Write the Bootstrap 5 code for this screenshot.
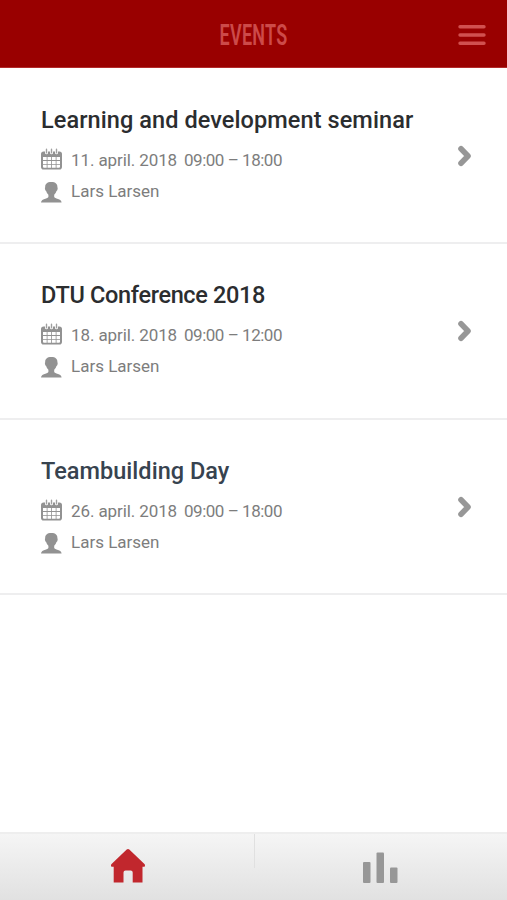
<!DOCTYPE html>
<html lang="en">
<head>
<meta charset="utf-8">
<meta name="viewport" content="width=device-width, initial-scale=1">
<title>Events</title>
<link rel="stylesheet" href="https://cdn.jsdelivr.net/npm/bootstrap@5.3.0/dist/css/bootstrap.min.css">
<style>
body{font-family:Roboto,"Open Sans",sans-serif;background:#fff}
.topbar{height:68px;background:#990000;padding:3px 21px 0;border-bottom:1px solid #b22b2b}
.topbar h1{font:600 30px/1 Roboto,sans-serif;color:#cc4a49;transform:scaleX(.6);letter-spacing:.4px}
.side{width:28px}
.event{height:175.4px;padding:35px 35px 0 41px;border-bottom:2px solid #eeeeef;color:#2b2d2f}
.events{padding-top:1px}
.event h2{font-size:23.5px;line-height:32px;font-weight:500;margin:0 0 9px;letter-spacing:.08px;white-space:nowrap}
.event h2.tight{letter-spacing:-.34px}
.event.cool h2{color:#37434f;letter-spacing:.02px}
.meta{height:31px;line-height:31px;font-size:17px;color:#7d7d7d;gap:9px}
.date{width:113px;white-space:nowrap;letter-spacing:-.1px}
.time{letter-spacing:-.48px}
.cal-icon{margin-bottom:3px}
.person-icon{margin-top:2px}
.chev{margin-top:41px}
.tabs{height:68px;background:linear-gradient(#f5f5f5,#e1e1e1);border-top:2px solid #eee}
.tab-sep{width:1px;height:34px;background:#e0e0e0}
.home-icon{margin:0 0 2px 2px}
.bars-icon{margin:2px 1px 0 0}
</style>
</head>
<body class="vh-100 d-flex flex-column overflow-hidden">
<svg class="d-none" xmlns="http://www.w3.org/2000/svg">
  <symbol id="cal" viewBox="0 0 21 22">
    <path fill="#929292" fill-rule="evenodd" d="M2.600 3.500H4v1.200a1.500 1.500 0 0 0 3 0V3.500h2v1.200a1.500 1.500 0 0 0 3 0V3.500h2v1.200a1.500 1.500 0 0 0 3 0V3.500h1.400Q21 3.500 21 6v12.700Q21 21.500 18.400 21.500H2.600Q0 21.500 0 18.700V6Q0 3.500 2.600 3.500zM2 9v3h3.700V9zM6.500 9v3h3.700V9zM11 9v3h3.700V9zM15.500 9v3H19V9zM2 12.900v3h3.700v-3zM6.500 12.900v3h3.700v-3zM11 12.900v3h3.700v-3zM15.500 12.900v3H19v-3zM2 16.800v2Q2 19.800 3 19.800h2.700v-3zM6.500 16.800v3h3.700v-3zM11 16.800v3h3.700v-3zM15.500 16.800v3H18Q19 19.800 19 18.800v-2z"/>
    <path stroke="#a0a0a0" stroke-width="1.400" stroke-linecap="round" d="M5.500 1.200v3.500M10.500 1.200v3.500M15.500 1.200v3.500"/>
  </symbol>
  <symbol id="person" viewBox="0 0 21 21">
    <path fill="#929292" d="M10.300 0C14.600 0 16.600 2 16.400 5.200Q17 5.500 16.500 7.400Q16.200 8.600 15.500 9Q14.800 11.400 13.200 12.800V15Q13.500 15.800 15.500 16.500Q20.500 17.500 20.600 20.600H0Q.1 17.500 5.100 16.500Q7.100 15.800 7.400 15V12.800Q5.800 11.400 5.100 9Q4.400 8.600 4.100 7.400Q3.600 5.500 4.200 5.200C4 2 6 0 10.300 0z"/>
  </symbol>
  <symbol id="chevron" viewBox="0 0 15 22">
    <path fill="none" stroke="#979797" stroke-width="5.600" stroke-linecap="round" stroke-linejoin="round" d="M4 3.800L11 11L4 18.200"/>
  </symbol>
</svg>
<header class="topbar d-flex align-items-center justify-content-between flex-shrink-0">
  <span class="side"></span>
  <h1 class="m-0">EVENTS</h1>
  <svg class="side" height="22" viewBox="0 0 28 22"><path stroke="#d1504f" stroke-width="3.400" stroke-linecap="round" d="M2 2.800h24M2 11h24M2 19.300h24"/></svg>
</header>
<main class="events flex-grow-1">
  <article class="event d-flex justify-content-between">
    <div>
      <h2>Learning and development seminar</h2>
      <div class="meta d-flex align-items-center"><svg class="cal-icon" width="21" height="22"><use href="#cal"/></svg><span class="d-flex"><span class="date">11. april. 2018</span><span class="time">09:00 – 18:00</span></span></div>
      <div class="meta d-flex align-items-center"><svg class="person-icon" width="21" height="21"><use href="#person"/></svg><span>Lars Larsen</span></div>
    </div>
    <svg class="chev" width="15" height="22"><use href="#chevron"/></svg>
  </article>
  <article class="event d-flex justify-content-between">
    <div>
      <h2 class="tight">DTU Conference 2018</h2>
      <div class="meta d-flex align-items-center"><svg class="cal-icon" width="21" height="22"><use href="#cal"/></svg><span class="d-flex"><span class="date">18. april. 2018</span><span class="time">09:00 – 12:00</span></span></div>
      <div class="meta d-flex align-items-center"><svg class="person-icon" width="21" height="21"><use href="#person"/></svg><span>Lars Larsen</span></div>
    </div>
    <svg class="chev" width="15" height="22"><use href="#chevron"/></svg>
  </article>
  <article class="event cool d-flex justify-content-between">
    <div>
      <h2>Teambuilding Day</h2>
      <div class="meta d-flex align-items-center"><svg class="cal-icon" width="21" height="22"><use href="#cal"/></svg><span class="d-flex"><span class="date">26. april. 2018</span><span class="time">09:00 – 18:00</span></span></div>
      <div class="meta d-flex align-items-center"><svg class="person-icon" width="21" height="21"><use href="#person"/></svg><span>Lars Larsen</span></div>
    </div>
    <svg class="chev" width="15" height="22"><use href="#chevron"/></svg>
  </article>
</main>
<nav class="tabs d-flex flex-shrink-0">
  <a href="#" class="flex-fill d-flex justify-content-center align-items-center" aria-label="Home">
    <svg class="home-icon" width="36" height="36" viewBox="0 0 36 36"><path fill="#c1272d" d="M16.700 1.500Q18 .3 19.300 1.500L34.700 16.200Q35.700 18.700 33.500 18.800H32.500V34.500H22.700V24.500Q22.700 22.500 20.700 22.500H15.500Q13.500 22.500 13.500 24.500V34.500H3.700V18.800H2.500Q.3 18.700 1.300 16.200z"/></svg>
  </a>
  <span class="tab-sep"></span>
  <a href="#" class="flex-fill d-flex justify-content-center align-items-center" aria-label="Statistics">
    <svg class="bars-icon" width="36" height="32" viewBox="0 0 36 32"><g fill="#979797"><rect x="1" y="10" width="7.500" height="21" rx="1"/><rect x="14.500" y="0.500" width="7.500" height="30.500" rx="1"/><rect x="28" y="15.500" width="7.500" height="15.500" rx="1"/></g></svg>
  </a>
</nav>
<script src="https://cdn.jsdelivr.net/npm/bootstrap@5.3.0/dist/js/bootstrap.bundle.min.js"></script>
</body>
</html>
